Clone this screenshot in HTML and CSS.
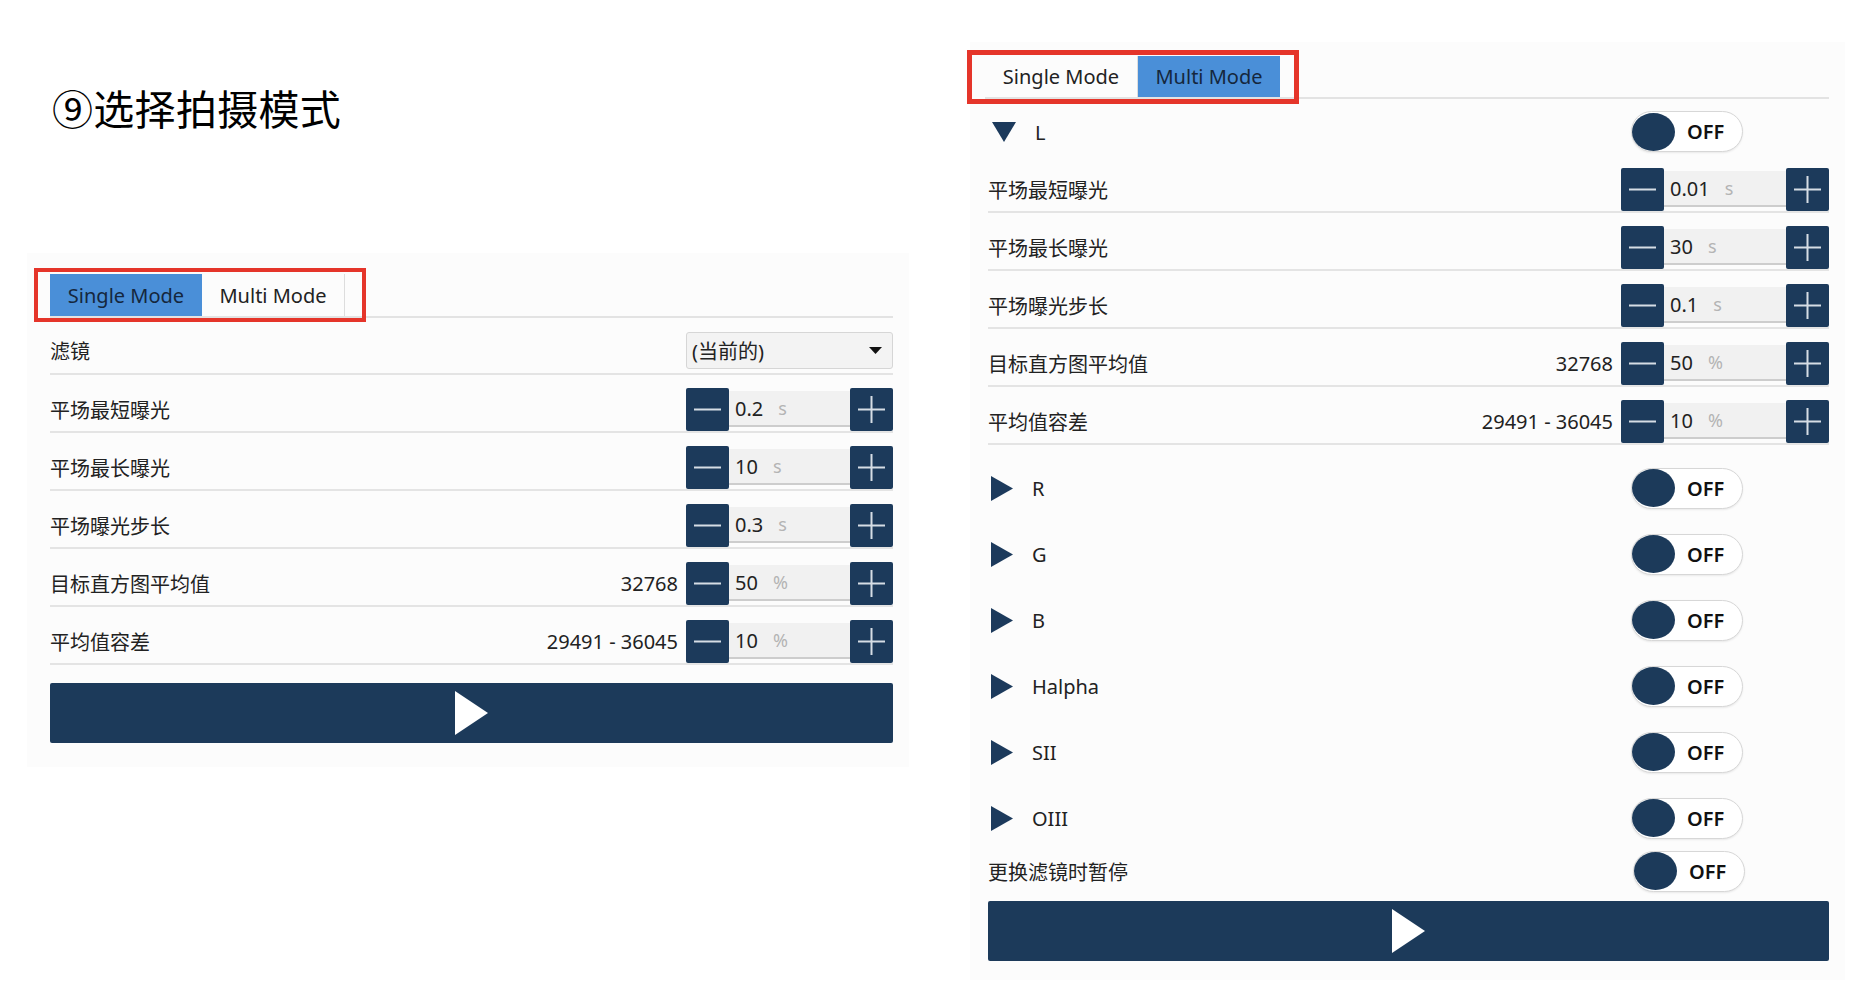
FILE: index.html
```html
<!DOCTYPE html>
<html lang="zh-CN">
<head>
<meta charset="utf-8">
<title>选择拍摄模式</title>
<link rel="stylesheet" href="styles.css">
</head>
<body>
<div class="page">
  <div class="left-col">
    <h1 class="title">⑨选择拍摄模式</h1>

    <section class="panel panel-single">
      <div class="red-box red-left"></div>
      <div class="tabbar">
        <div class="tab tab-active tab-w1">Single Mode</div>
        <div class="tab tab-idle tab-w2">Multi Mode</div>
      </div>

      <div class="row row-filter">
        <span class="label">滤镜</span>
        <div class="dropdown">
          <span>(当前的)</span>
          <svg class="caret" width="13" height="7" viewBox="0 0 13 7"><polygon points="0,0 13,0 6.5,7" fill="#111"/></svg>
        </div>
      </div>

      <div class="row">
        <span class="label">平场最短曝光</span>
        <div class="stepper">
          <div class="sbtn"><svg width="27" height="27" viewBox="0 0 27 27"><rect x="0" y="12.5" width="27" height="2" fill="#d6dde5"/></svg></div>
          <div class="sinput"><span class="val">0.2</span><span class="unit">s</span></div>
          <div class="sbtn"><svg width="27" height="27" viewBox="0 0 27 27"><rect x="0" y="12.5" width="27" height="2" fill="#d6dde5"/><rect x="12.5" y="0" width="2" height="27" fill="#d6dde5"/></svg></div>
        </div>
      </div>

      <div class="row">
        <span class="label">平场最长曝光</span>
        <div class="stepper">
          <div class="sbtn"><svg width="27" height="27" viewBox="0 0 27 27"><rect x="0" y="12.5" width="27" height="2" fill="#d6dde5"/></svg></div>
          <div class="sinput"><span class="val">10</span><span class="unit">s</span></div>
          <div class="sbtn"><svg width="27" height="27" viewBox="0 0 27 27"><rect x="0" y="12.5" width="27" height="2" fill="#d6dde5"/><rect x="12.5" y="0" width="2" height="27" fill="#d6dde5"/></svg></div>
        </div>
      </div>

      <div class="row">
        <span class="label">平场曝光步长</span>
        <div class="stepper">
          <div class="sbtn"><svg width="27" height="27" viewBox="0 0 27 27"><rect x="0" y="12.5" width="27" height="2" fill="#d6dde5"/></svg></div>
          <div class="sinput"><span class="val">0.3</span><span class="unit">s</span></div>
          <div class="sbtn"><svg width="27" height="27" viewBox="0 0 27 27"><rect x="0" y="12.5" width="27" height="2" fill="#d6dde5"/><rect x="12.5" y="0" width="2" height="27" fill="#d6dde5"/></svg></div>
        </div>
      </div>

      <div class="row">
        <span class="label">目标直方图平均值</span>
        <span class="extra">32768</span>
        <div class="stepper">
          <div class="sbtn"><svg width="27" height="27" viewBox="0 0 27 27"><rect x="0" y="12.5" width="27" height="2" fill="#d6dde5"/></svg></div>
          <div class="sinput"><span class="val">50</span><span class="unit">%</span></div>
          <div class="sbtn"><svg width="27" height="27" viewBox="0 0 27 27"><rect x="0" y="12.5" width="27" height="2" fill="#d6dde5"/><rect x="12.5" y="0" width="2" height="27" fill="#d6dde5"/></svg></div>
        </div>
      </div>

      <div class="row">
        <span class="label">平均值容差</span>
        <span class="extra">29491 - 36045</span>
        <div class="stepper">
          <div class="sbtn"><svg width="27" height="27" viewBox="0 0 27 27"><rect x="0" y="12.5" width="27" height="2" fill="#d6dde5"/></svg></div>
          <div class="sinput"><span class="val">10</span><span class="unit">%</span></div>
          <div class="sbtn"><svg width="27" height="27" viewBox="0 0 27 27"><rect x="0" y="12.5" width="27" height="2" fill="#d6dde5"/><rect x="12.5" y="0" width="2" height="27" fill="#d6dde5"/></svg></div>
        </div>
      </div>

      <div class="play play-left">
        <svg width="33" height="44" viewBox="0 0 33 44"><polygon points="0,0 33,22 0,44" fill="#ffffff"/></svg>
      </div>
    </section>
  </div>

  <section class="panel panel-multi">
    <div class="red-box red-right"></div>
    <div class="tabbar tabbar-right">
      <div class="tab tab-idle tab-w3">Single Mode</div>
      <div class="tab tab-active tab-w4">Multi Mode</div>
    </div>

    <div class="head head-open">
      <svg class="tri-down" width="24" height="20" viewBox="0 0 24 20"><polygon points="0,0 24,0 12,20" fill="#1c3a5c"/></svg>
      <span class="head-label">L</span>
      <div class="toggle"><span class="knob"></span><span class="off">OFF</span></div>
    </div>

    <div class="row">
      <span class="label">平场最短曝光</span>
      <div class="stepper">
        <div class="sbtn"><svg width="27" height="27" viewBox="0 0 27 27"><rect x="0" y="12.5" width="27" height="2" fill="#d6dde5"/></svg></div>
        <div class="sinput"><span class="val">0.01</span><span class="unit">s</span></div>
        <div class="sbtn"><svg width="27" height="27" viewBox="0 0 27 27"><rect x="0" y="12.5" width="27" height="2" fill="#d6dde5"/><rect x="12.5" y="0" width="2" height="27" fill="#d6dde5"/></svg></div>
      </div>
    </div>

    <div class="row">
      <span class="label">平场最长曝光</span>
      <div class="stepper">
        <div class="sbtn"><svg width="27" height="27" viewBox="0 0 27 27"><rect x="0" y="12.5" width="27" height="2" fill="#d6dde5"/></svg></div>
        <div class="sinput"><span class="val">30</span><span class="unit">s</span></div>
        <div class="sbtn"><svg width="27" height="27" viewBox="0 0 27 27"><rect x="0" y="12.5" width="27" height="2" fill="#d6dde5"/><rect x="12.5" y="0" width="2" height="27" fill="#d6dde5"/></svg></div>
      </div>
    </div>

    <div class="row">
      <span class="label">平场曝光步长</span>
      <div class="stepper">
        <div class="sbtn"><svg width="27" height="27" viewBox="0 0 27 27"><rect x="0" y="12.5" width="27" height="2" fill="#d6dde5"/></svg></div>
        <div class="sinput"><span class="val">0.1</span><span class="unit">s</span></div>
        <div class="sbtn"><svg width="27" height="27" viewBox="0 0 27 27"><rect x="0" y="12.5" width="27" height="2" fill="#d6dde5"/><rect x="12.5" y="0" width="2" height="27" fill="#d6dde5"/></svg></div>
      </div>
    </div>

    <div class="row">
      <span class="label">目标直方图平均值</span>
      <span class="extra">32768</span>
      <div class="stepper">
        <div class="sbtn"><svg width="27" height="27" viewBox="0 0 27 27"><rect x="0" y="12.5" width="27" height="2" fill="#d6dde5"/></svg></div>
        <div class="sinput"><span class="val">50</span><span class="unit">%</span></div>
        <div class="sbtn"><svg width="27" height="27" viewBox="0 0 27 27"><rect x="0" y="12.5" width="27" height="2" fill="#d6dde5"/><rect x="12.5" y="0" width="2" height="27" fill="#d6dde5"/></svg></div>
      </div>
    </div>

    <div class="row">
      <span class="label">平均值容差</span>
      <span class="extra">29491 - 36045</span>
      <div class="stepper">
        <div class="sbtn"><svg width="27" height="27" viewBox="0 0 27 27"><rect x="0" y="12.5" width="27" height="2" fill="#d6dde5"/></svg></div>
        <div class="sinput"><span class="val">10</span><span class="unit">%</span></div>
        <div class="sbtn"><svg width="27" height="27" viewBox="0 0 27 27"><rect x="0" y="12.5" width="27" height="2" fill="#d6dde5"/><rect x="12.5" y="0" width="2" height="27" fill="#d6dde5"/></svg></div>
      </div>
    </div>

    <div class="heads">
      <div class="head">
        <svg class="tri-right" width="22" height="25" viewBox="0 0 22 25"><polygon points="0,0 22,12.5 0,25" fill="#1c3a5c"/></svg>
        <span class="head-label">R</span>
        <div class="toggle"><span class="knob"></span><span class="off">OFF</span></div>
      </div>
      <div class="head">
        <svg class="tri-right" width="22" height="25" viewBox="0 0 22 25"><polygon points="0,0 22,12.5 0,25" fill="#1c3a5c"/></svg>
        <span class="head-label">G</span>
        <div class="toggle"><span class="knob"></span><span class="off">OFF</span></div>
      </div>
      <div class="head">
        <svg class="tri-right" width="22" height="25" viewBox="0 0 22 25"><polygon points="0,0 22,12.5 0,25" fill="#1c3a5c"/></svg>
        <span class="head-label">B</span>
        <div class="toggle"><span class="knob"></span><span class="off">OFF</span></div>
      </div>
      <div class="head">
        <svg class="tri-right" width="22" height="25" viewBox="0 0 22 25"><polygon points="0,0 22,12.5 0,25" fill="#1c3a5c"/></svg>
        <span class="head-label">Halpha</span>
        <div class="toggle"><span class="knob"></span><span class="off">OFF</span></div>
      </div>
      <div class="head">
        <svg class="tri-right" width="22" height="25" viewBox="0 0 22 25"><polygon points="0,0 22,12.5 0,25" fill="#1c3a5c"/></svg>
        <span class="head-label">SII</span>
        <div class="toggle"><span class="knob"></span><span class="off">OFF</span></div>
      </div>
      <div class="head">
        <svg class="tri-right" width="22" height="25" viewBox="0 0 22 25"><polygon points="0,0 22,12.5 0,25" fill="#1c3a5c"/></svg>
        <span class="head-label">OIII</span>
        <div class="toggle"><span class="knob"></span><span class="off">OFF</span></div>
      </div>
    </div>

    <div class="pause-row">
      <span class="label">更换滤镜时暂停</span>
      <div class="toggle toggle-pause"><span class="knob"></span><span class="off">OFF</span></div>
    </div>

    <div class="play play-right">
      <svg width="33" height="44" viewBox="0 0 33 44"><polygon points="0,0 33,22 0,44" fill="#ffffff"/></svg>
    </div>
  </section>
</div>
</body>
</html>
```
FILE: styles.css
```css
* { box-sizing: border-box; }

html, body {
  margin: 0;
  padding: 0;
  background: #ffffff;
}

body {
  font-family: "Noto Sans", "Noto Sans CJK SC", sans-serif;
  color: #222222;
  font-size: 20px;
}

.page {
  display: flex;
  align-items: flex-start;
  width: 1876px;
  height: 994px;
}

.left-col {
  width: 882px;
  margin-left: 27px;
  display: flex;
  flex-direction: column;
}

.title {
  margin: 83px 0 0 25px;
  font-family: "Noto Sans CJK SC", sans-serif;
  font-size: 41px;
  line-height: 48px;
  font-weight: 400;
  color: #000000;
  letter-spacing: 0.3px;
}

.panel {
  position: relative;
  background: #fcfcfc;
  display: flex;
  flex-direction: column;
}

.panel-single {
  margin-top: 122px;
  width: 882px;
  padding: 21px 16px 24px 23px;
}

.panel-multi {
  margin-left: 61px;
  margin-top: 42px;
  width: 875px;
  padding: 14px 16px 19px 18px;
}

/* red annotation boxes */
.red-box {
  position: absolute;
  width: 332px;
  height: 54px;
  border: 4px solid #e5352a;
  z-index: 2;
  pointer-events: none;
}
.red-left { left: 7px; top: 15px; }
.red-right { left: -3px; top: 8px; border-width: 5px; }

/* tabs */
.tabbar {
  display: flex;
  border-bottom: 2px solid #e3e3e3;
}
.tabbar-right {
  margin-left: -3px;
}
.tab {
  height: 42px;
  display: flex;
  align-items: center;
  justify-content: center;
  font-size: 20px;
  color: #222222;
}
.tabbar-right .tab { height: 41px; }
.tab-active {
  background: #4a8fd8;
  color: #15273d;
}
.tab-idle {
  border-right: 1px solid #dddddd;
}
.tab-w1 { width: 152px; }
.tab-w2 { width: 143px; }
.tab-w3 { width: 153px; }
.tab-w4 { width: 142px; }

/* rows */
.row {
  display: flex;
  align-items: center;
  padding-top: 13px;
  border-bottom: 2px solid #e4e4e4;
}
.row-filter {
  padding-top: 14px;
  padding-bottom: 4px;
}
.label {
  flex: 1;
  font-size: 20px;
  color: #222222;
  white-space: nowrap;
}
.extra {
  margin-right: 8px;
  font-size: 20px;
  color: #222222;
}

.dropdown {
  width: 207px;
  height: 37px;
  background: #f3f3f3;
  border: 1px solid #d6d6d6;
  border-radius: 3px;
  display: flex;
  align-items: center;
  justify-content: space-between;
  padding: 0 10px 0 5px;
  font-size: 20px;
  color: #222222;
}

.stepper {
  display: flex;
  width: 207px;
  height: 43px;
}
.panel-multi .stepper { width: 208px; }
.sbtn {
  width: 43px;
  height: 43px;
  background: #1c3a5b;
  border-radius: 2px;
  display: flex;
  align-items: center;
  justify-content: center;
  flex: none;
}
.sinput {
  flex: 1;
  margin: 3px 0 4px;
  background: #f1f1f1;
  border-bottom: 2px solid #cdcdcd;
  display: flex;
  align-items: center;
  padding-left: 6px;
}
.val {
  font-size: 20px;
  color: #222222;
}
.unit {
  margin-left: 15px;
  font-size: 18px;
  color: #b4b4b4;
}

/* play buttons */
.play {
  height: 60px;
  background: #1c3a5a;
  border-radius: 2px;
  display: flex;
  align-items: center;
  justify-content: center;
}
.play-left { margin-top: 18px; }
.play-right { margin-top: 10px; }

/* expander headers */
.head {
  height: 66px;
  display: flex;
  align-items: center;
}
.head-open {
  height: 56px;
  align-items: flex-start;
  padding-top: 12px;
}
.head-open .tri-down {
  margin-top: 11px;
}
.head-open .head-label { margin-top: 8px; margin-left: 19px; }
.tri-down { margin-left: 4px; flex: none; }
.tri-right { margin-left: 3px; flex: none; margin-right: 2px; }
.head-label {
  flex: 1;
  margin-left: 17px;
  font-size: 20px;
  color: #222222;
}
.heads {
  margin-top: 10px;
  display: flex;
  flex-direction: column;
}

.toggle {
  width: 112px;
  height: 41px;
  border: 1.5px solid #d7d7d7;
  border-radius: 21px;
  background: #ffffff;
  box-shadow: 0 1px 2px rgba(0, 0, 0, 0.08);
  display: flex;
  align-items: center;
  margin-right: 86px;
  flex: none;
}
.toggle-pause { margin-right: 84px; }
.knob {
  width: 43px;
  height: 38px;
  border-radius: 50%;
  background: #1c3a5a;
  flex: none;
}
.off {
  margin-left: 12px;
  font-size: 20px;
  font-weight: 600;
  color: #111111;
}

.pause-row {
  height: 40px;
  display: flex;
  align-items: center;
}
```
